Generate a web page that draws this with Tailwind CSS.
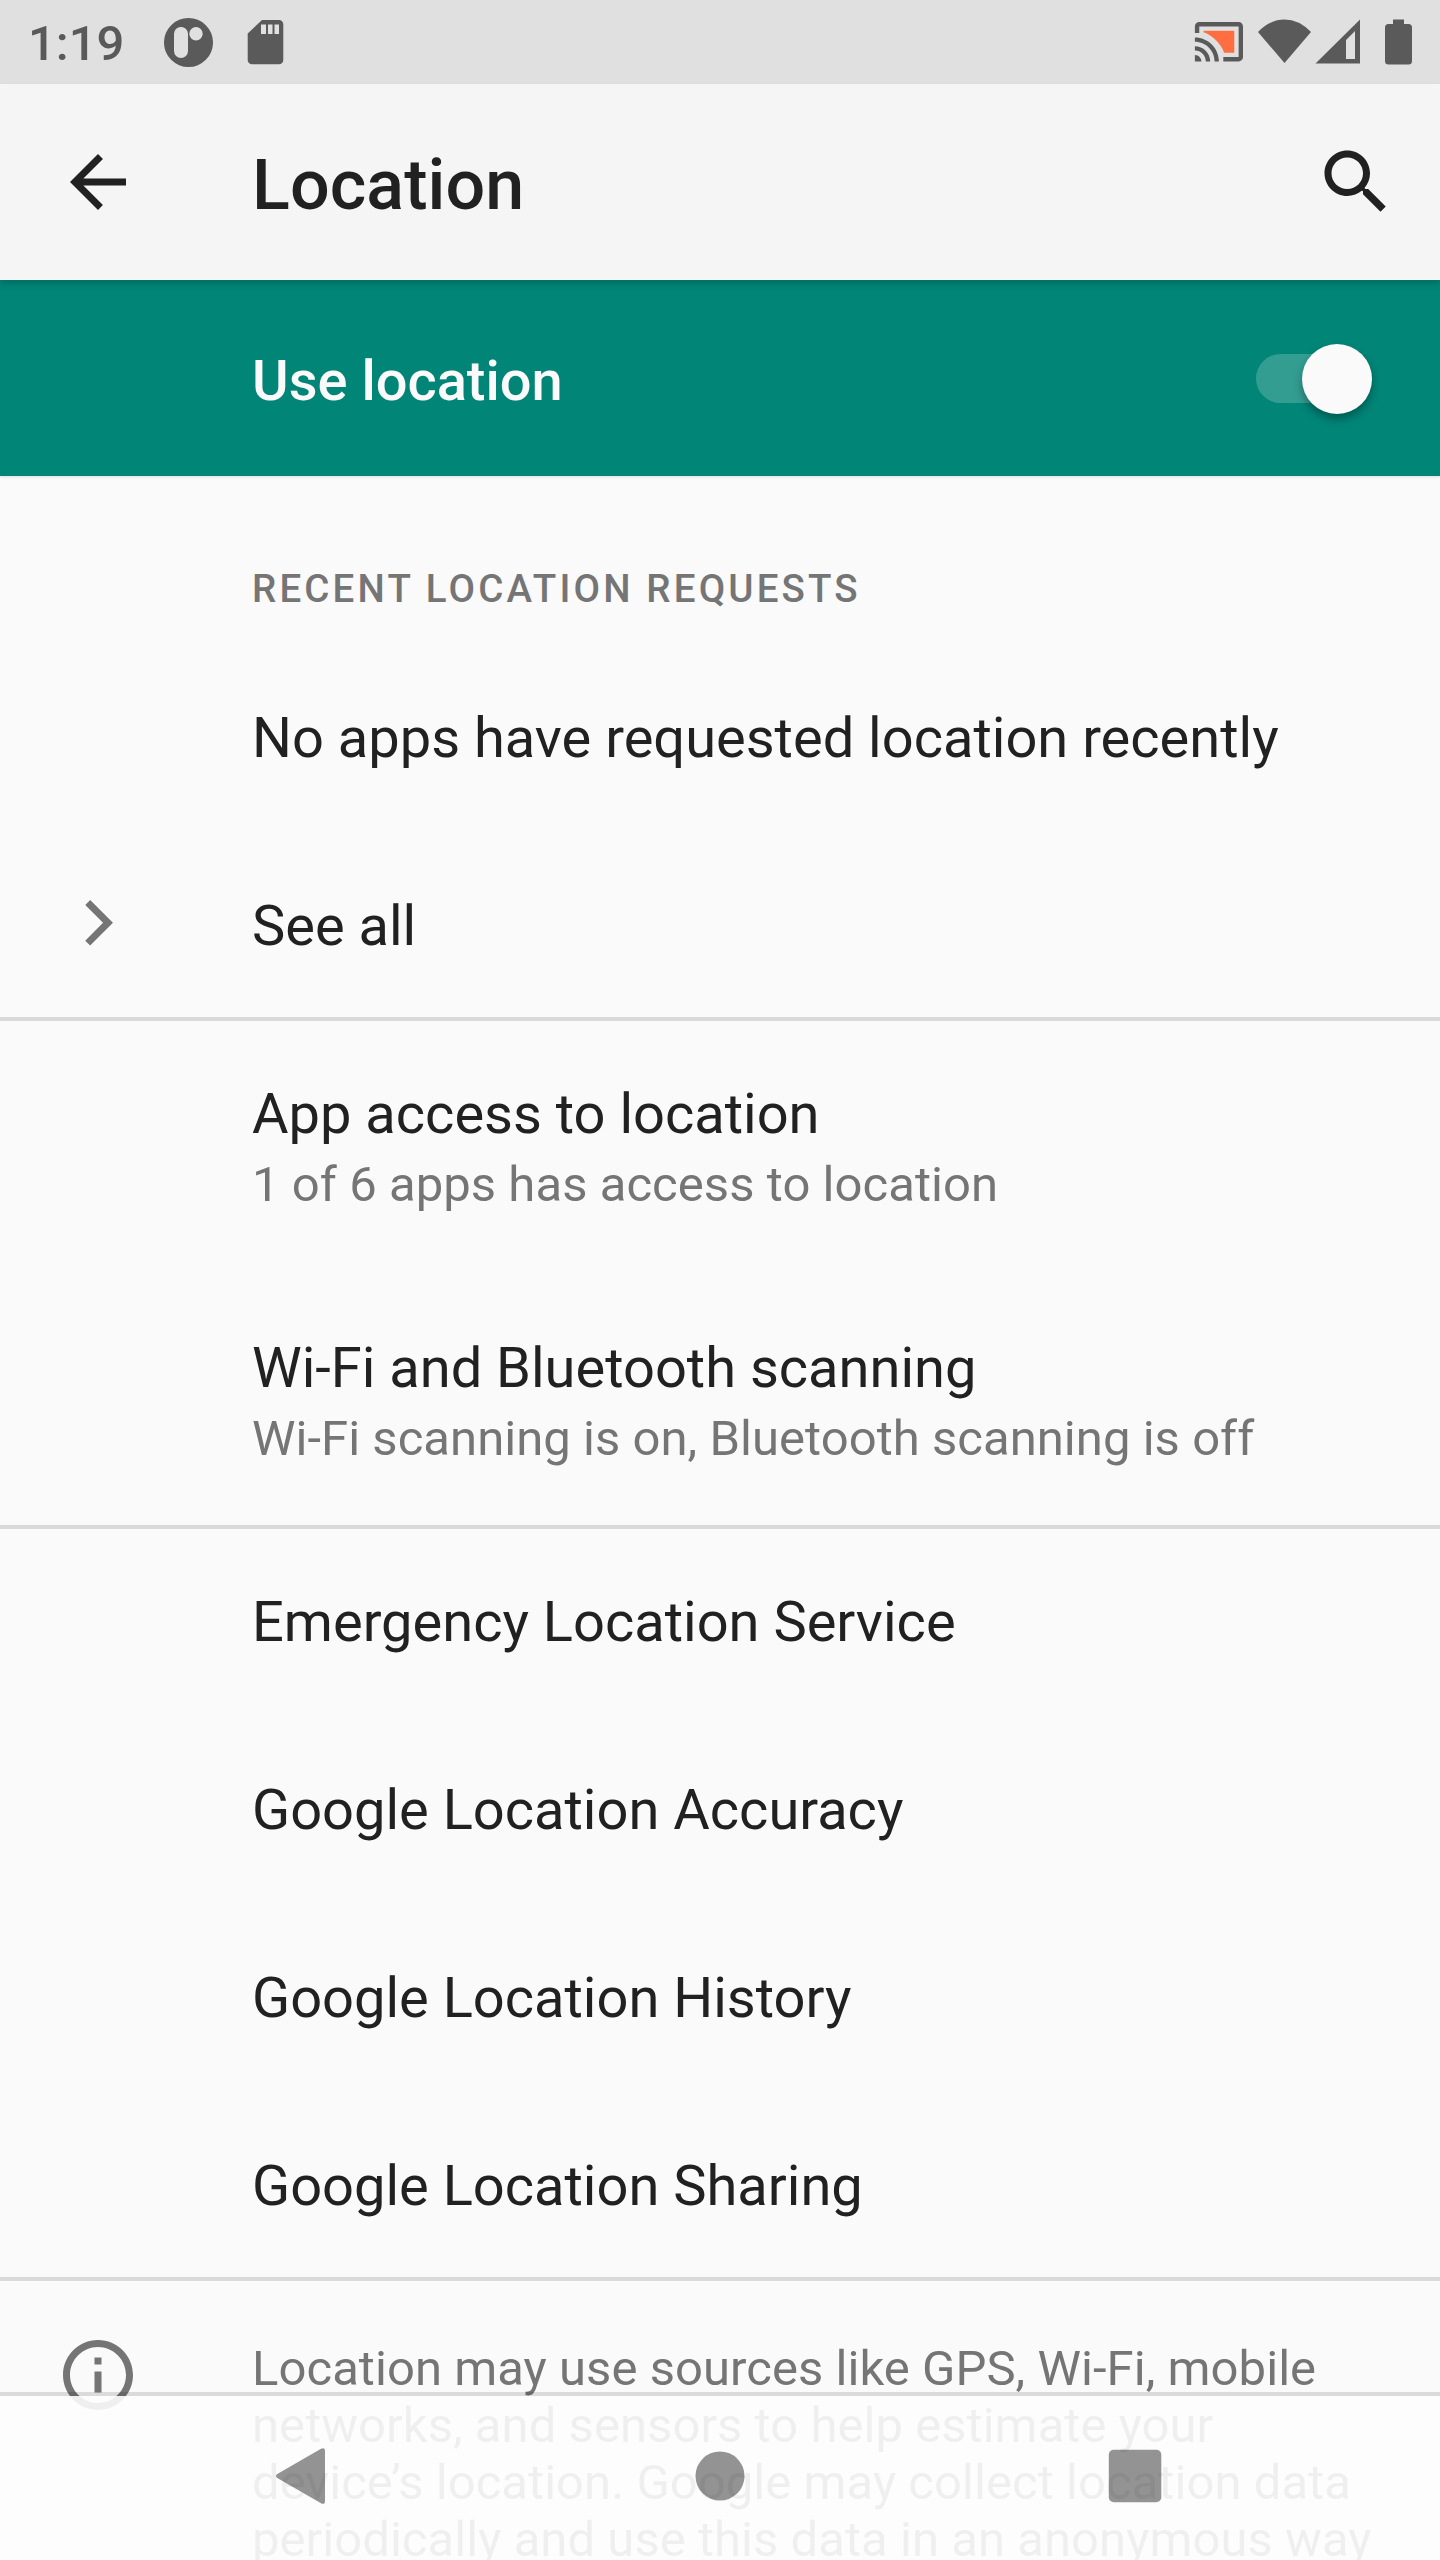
<!DOCTYPE html>
<html lang="en">
<head>
<meta charset="utf-8">
<title>Location</title>
<script src="https://cdn.jsdelivr.net/npm/@tailwindcss/browser@4"></script>
</head>
<body class="bg-[#fafafa]">
<div class="relative flex h-[2560px] w-[1440px] flex-col overflow-hidden bg-[#fafafa] font-[Roboto,sans-serif] text-[56px] leading-[66px] text-[#212121]">
  <!-- Status bar -->
  <div class="flex h-[84px] shrink-0 items-center justify-between bg-[#e0e0e0] pl-[28px] text-[#5a5a5a]">
    <div class="flex h-full items-center">
      <span class="w-[136px] pt-[3px] text-[49px] leading-[58px] font-medium">1:19</span>
      <svg class="h-[84px] w-[49px]" viewBox="164 0 49 84" fill="currentColor"><path fill-rule="evenodd" d="M188.500 18a24.500 24.500 0 1 0 0 49a24.500 24.500 0 1 0 0-49zM181 27a6.800 6.800 0 0 0-7 7v17a6.800 6.800 0 0 0 14 0V34a6.800 6.800 0 0 0-7-7zM196 27a6.700 6.700 0 1 0 0 13.400a6.700 6.700 0 1 0 0-13.400z"/></svg>
      <svg class="ml-[34px] h-[84px] w-[37px]" viewBox="247 0 37 84" fill="currentColor"><path fill-rule="evenodd" d="M262 20h17a4.300 4.300 0 0 1 4.300 4.300V60a4.300 4.300 0 0 1-4.300 4.300H252a4.300 4.300 0 0 1-4.300-4.300V33.500zM261 24.500v9.500h5v-9.500zM268 24.500v9.500h4.500v-9.500zM274.500 24.500v9.500h4.500v-9.500z"/></svg>
    </div>
    <svg class="h-[84px] w-[260px]" viewBox="1180 0 260 84" fill="currentColor">
      <g transform="translate(1192.700 15.500) scale(2.1875)">
        <path d="M1 18v3h3c0-1.660-1.340-3-3-3zm0-4v2c2.760 0 5 2.240 5 5h2c0-3.870-3.130-7-7-7zm0-4v2c4.970 0 9 4.030 9 9h2c0-6.080-4.930-11-11-11zm20-7H3c-1.100 0-2 .9-2 2v3h2V5h18v14h-7v2h7c1.100 0 2-.9 2-2V5c0-1.100-.9-2-2-2z"/>
        <path fill="#ff6e40" d="M19 7H5v.630c3.960 1.280 8.090 5.410 9.370 9.370H19z"/>
      </g>
      <path d="M1284.500 63L1258 32Q1270 19.500 1284.500 19.500T1311 32z"/>
      <path fill-rule="evenodd" d="M1315.500 63.500H1360V19.500zM1346 59V40L1355 31V59z"/>
      <path d="M1393 19.500h11V24h4.500a3.500 3.500 0 0 1 3.500 3.500V61a3.500 3.500 0 0 1-3.500 3.500h-20a3.500 3.500 0 0 1-3.500-3.500V27.500a3.500 3.500 0 0 1 3.500-3.500h4.500z"/>
    </svg>
  </div>

  <!-- App bar -->
  <header class="z-10 flex h-[196px] shrink-0 items-center bg-[#f5f5f5] pr-[42px] pl-[56px] shadow-[0_4px_6px_rgba(0,0,0,0.16)]">
    <svg class="size-[84px]" viewBox="0 0 24 24" fill="currentColor"><path d="M20 11H7.830l5.590-5.590L12 4l-8 8 8 8 1.410-1.410L7.830 13H20v-2z"/></svg>
    <h1 class="ml-[112px] grow pt-[5px] text-[70px] leading-[82px] font-medium tracking-[0.1px]">Location</h1>
    <svg class="size-[84px]" viewBox="0 0 24 24" fill="currentColor"><path d="M15.500 14h-.790l-.280-.270C15.410 12.590 16 11.110 16 9.500 16 5.910 13.090 3 9.500 3S3 5.910 3 9.500 5.910 16 9.500 16c1.610 0 3.090-.590 4.230-1.570l.270.280v.790l5 4.990L20.490 19l-4.990-5zm-6 0C7.010 14 5 11.990 5 9.500S7.010 5 9.500 5 14 7.010 14 9.500 11.990 14 9.500 14z"/></svg>
  </header>

  <!-- Master switch -->
  <div class="flex h-[196px] shrink-0 items-center justify-between bg-[#008577] pr-[68px] pl-[252px] text-[#fafafa] shadow-[0_1px_3px_rgba(0,0,0,0.12)]">
    <span class="pt-[5px] font-medium">Use location</span>
    <div class="mt-px flex h-[49px] w-[116px] items-center justify-end rounded-full bg-[#339d92]">
      <div class="size-[70px] shrink-0 rounded-full bg-[#fafafa] shadow-[0_5px_8px_rgba(0,0,0,0.32)]"></div>
    </div>
  </div>

  <main class="flex flex-col">
    <h2 class="h-[165px] pt-[90px] pl-[252px] text-[38.5px] leading-[45px] font-medium tracking-[3.15px] text-[#757575]">RECENT LOCATION REQUESTS</h2>
    <div class="flex h-[188px] items-center pt-[5px] pl-[252px]">No apps have requested location recently</div>
    <div class="flex h-[188px] items-center pl-[56px]">
      <svg class="mr-[112px] size-[84px] text-[#757575]" viewBox="0 0 84 84" fill="none" stroke="currentColor" stroke-width="7"><path d="M31.700 21.500L52 41.800L31.700 62.100"/></svg>
      <span class="pt-[5px]">See all</span>
    </div>

    <section class="border-t-4 border-[#dadada]">
      <div class="flex h-[250px] flex-col pt-[60px] pl-[252px]">
        <span>App access to location</span>
        <span class="pt-[9px] text-[49px] leading-[57px] tracking-[0.06px] text-[#757575]">1 of 6 apps has access to location</span>
      </div>
      <div class="flex h-[254px] flex-col pt-[64px] pl-[252px]">
        <span>Wi-Fi and Bluetooth scanning</span>
        <span class="pt-[9px] text-[49px] leading-[57px] tracking-[0.04px] text-[#757575]">Wi-Fi scanning is on, Bluetooth scanning is off</span>
      </div>
    </section>

    <section class="border-t-4 border-[#dadada]">
      <div class="flex h-[184px] items-center pt-px pl-[252px]">Emergency Location Service</div>
      <div class="flex h-[188px] items-center pt-[5px] pl-[252px]">Google Location Accuracy</div>
      <div class="flex h-[188px] items-center pt-[5px] pl-[252px]">Google Location History</div>
      <div class="flex h-[188px] items-center pt-[5px] pl-[252px]">Google Location Sharing</div>
    </section>

    <section class="flex border-t-4 border-[#dadada] pt-[52px] pl-[56px] text-[49px] leading-[57px] text-[#757575]">
      <svg class="mr-[112px] size-[84px] shrink-0" viewBox="0 0 24 24" fill="currentColor"><path d="M11 7h2v2h-2zm0 4h2v6h-2zm1-9C6.480 2 2 6.480 2 12s4.480 10 10 10 10-4.480 10-10S17.520 2 12 2zm0 18c-4.410 0-8-3.590-8-8s3.590-8 8-8 8 3.590 8 8-3.590 8-8 8z"/></svg>
      <p class="pt-[7px] tracking-[0.05px] whitespace-nowrap">Location may use sources like GPS, Wi-Fi, mobile<br>networks, and sensors to help estimate your<br>device’s location. Google may collect location data<br>periodically and use this data in an anonymous way</p>
    </section>
  </main>

  <!-- System navigation, translucent over the scrolling list -->
  <nav class="absolute inset-x-0 bottom-0 h-[168px]">
    <div class="h-1 bg-black/12"></div>
    <div class="h-[164px] bg-[#fdfdfd]/90">
      <svg class="h-[164px] w-[1440px]" viewBox="0 2396 1440 164" fill="#000" fill-opacity=".42">
        <path d="M277.300 2474L321 2448.700Q325 2447 325 2451V2501Q325 2505 321 2503.300L277.300 2478Q274.500 2476 277.300 2474z"/>
        <circle cx="720" cy="2476" r="24.500"/>
        <rect x="1108.800" y="2449.700" width="52.500" height="52.500" rx="5"/>
      </svg>
    </div>
  </nav>
</div>
</body>
</html>
